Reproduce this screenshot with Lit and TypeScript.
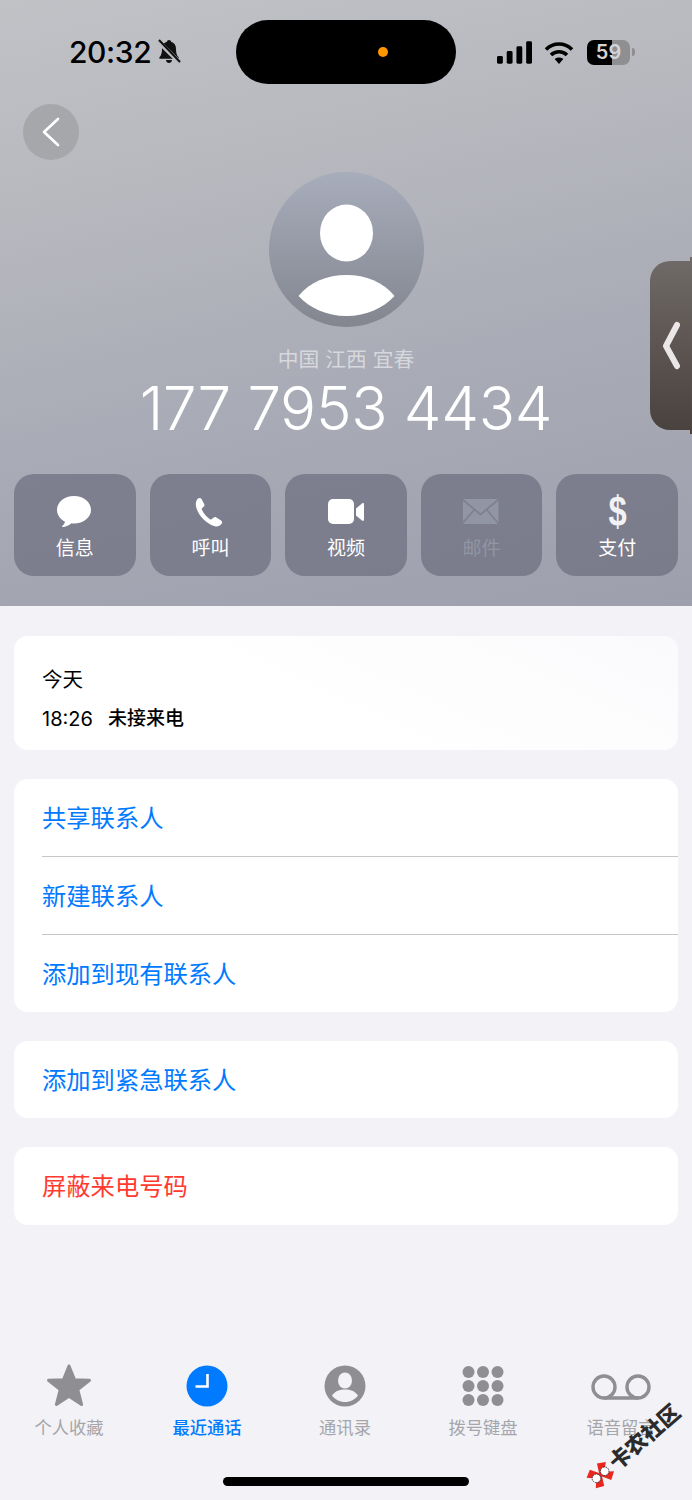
import { LitElement, html, css, svg } from 'lit';
import { customElement } from 'lit/decorators.js';

const actionIcons = {
  message: svg`<svg width="36" height="40" viewBox="1 0 36 40"><path fill="#fff" d="M18 4C8.600 4 1 10.200 1 17.900c0 5 3.200 9.300 8 11.800-.4 1.700-1.500 3.300-2.900 4.500-.4.400-.1 1 .4.900 3.400-.300 6.600-1.700 8.900-3.800 1 .1 1.700.2 2.600.2 9.400 0 17-6.300 17-13.600C35 10.200 27.400 4 18 4z"/></svg>`,
  phone: svg`<svg width="34" height="37" viewBox="1.500 0 24 26"><path fill="#fff" d="M5 3.200C6 2.400 7 2.600 7.600 3.600L9.400 7C9.800 7.800 9.600 8.500 9 9L8 9.800C7.600 10.200 7.600 10.600 7.800 11.100C9 13.800 11 16.100 13.500 17.700C14 18 14.500 18 14.900 17.600L15.900 16.700C16.500 16.200 17.300 16.100 18 16.500L21.300 18.600C22.200 19.200 22.400 20.300 21.600 21.100C20.400 22.400 18.900 23.200 17 22.700C10.500 21 4.800 14.500 3.600 8.500C3.200 6.300 3.800 4.400 5 3.200Z"/></svg>`,
  video: svg`<svg width="38" height="40" viewBox="0 0 38 40"><rect x="1" y="7" width="26" height="25" rx="5" fill="#fff"/><path fill="#fff" d="M29 16.500 35 11.500c1-.8 2-.3 2 1v15c0 1.300-1 1.800-2 1l-6-5z"/></svg>`,
  mail: svg`<svg width="38" height="40" viewBox="2.500 1 38 40" fill="none" stroke="#9295a3" stroke-width="1.800"><rect x="2" y="8" width="36" height="25" rx="2" fill="#9295a3" stroke="none"/><path stroke="#7f818f" d="M2 8.500 20 23.500 38 8.500M2 32.500 14 18.500M38 32.500 26 18.500"/></svg>`,
};

const tabIcons = {
  star: svg`<svg width="46" height="44" viewBox="0 0 46 44"><path fill="#8e8e93" stroke="#8e8e93" stroke-width="3" stroke-linejoin="round" d="M23 3 28.600 16.700 43.500 17.300 31.800 26.700 35.600 41.500 23 33.200 10.400 41.500 14.200 26.700 2.500 17.300 17.400 16.700z"/></svg>`,
  clock: svg`<svg width="46" height="44" viewBox="0 0 46 44"><circle cx="23" cy="23" r="20.500" fill="#007aff"/><path d="M23.500 11v12.500H11.500" fill="none" stroke="#fff" stroke-width="2.600"/></svg>`,
  person: svg`<svg width="46" height="44" viewBox="0 0 46 44"><circle cx="23" cy="23" r="20.500" fill="#8e8e93"/><ellipse cx="23" cy="17.500" rx="7" ry="8" fill="#f2f2f7"/><path d="M10 32.500C13 28 18 26.500 23 26.500s10 1.500 13 6C33 36.500 28.500 39 23 39s-10-2.500-13-6.500z" fill="#f2f2f7"/></svg>`,
  keypad: svg`<svg width="46" height="44" viewBox="0 0 46 44" fill="#8e8e93"><circle cx="8.500" cy="9" r="6"/><circle cx="23" cy="9" r="6"/><circle cx="37.500" cy="9" r="6"/><circle cx="8.500" cy="23" r="6"/><circle cx="23" cy="23" r="6"/><circle cx="37.500" cy="23" r="6"/><circle cx="8.500" cy="37" r="6"/><circle cx="23" cy="37" r="6"/><circle cx="37.500" cy="37" r="6"/></svg>`,
  voicemail: svg`<svg width="60" height="44" viewBox="0 0 60 44" fill="none" stroke="#8e8e93" stroke-width="3.400"><circle cx="13" cy="24" r="11"/><circle cx="47" cy="24" r="11"/><path d="M13 35h34"/></svg>`,
};

const actions = [
  { label: '信息', icon: actionIcons.message },
  { label: '呼叫', icon: actionIcons.phone },
  { label: '视频', icon: actionIcons.video },
  { label: '邮件', icon: actionIcons.mail, off: true },
  { label: '支付', icon: html`<span class="dollar">$</span>` },
];

const tabs = [
  { label: '个人收藏', icon: tabIcons.star },
  { label: '最近通话', icon: tabIcons.clock, active: true },
  { label: '通讯录', icon: tabIcons.person },
  { label: '拨号键盘', icon: tabIcons.keypad },
  { label: '语音留言', icon: tabIcons.voicemail },
];

@customElement('app-root')
export class AppRoot extends LitElement {
  static styles = css`
    :host {
      display: flex;
      flex-direction: column;
      position: relative;
      width: 692px;
      height: 1500px;
      overflow: hidden;
      background: #f2f2f7;
      font-family: Inter, 'Noto Sans CJK SC', sans-serif;
      color: #000;
    }

    .header {
      height: 606px;
      flex: none;
      background: linear-gradient(168deg, #c1c2c6 0%, #b7b8be 30%, #a9abb6 60%, #9d9fad 100%);
    }

    .status {
      display: flex;
      align-items: center;
      height: 64px;
      padding-top: 20px;
    }
    .time-wrap {
      width: 236px;
      display: flex;
      align-items: center;
      padding-left: 69px;
      box-sizing: border-box;
      gap: 6px;
      font-size: 30px;
      font-weight: 500;
      letter-spacing: -0.4px;
    }
    .island {
      width: 220px;
      height: 64px;
      border-radius: 32px;
      background: #000;
      display: flex;
      align-items: center;
      justify-content: flex-end;
      padding-right: 68px;
      box-sizing: border-box;
    }
    .dot {
      width: 10px;
      height: 10px;
      border-radius: 50%;
      background: #ff9500;
    }
    .status-right {
      display: flex;
      align-items: center;
      padding-left: 41px;
      gap: 12px;
    }
    .battery {
      position: relative;
      width: 43px;
      height: 25px;
      margin-left: 1px;
      border-radius: 7px;
      overflow: hidden;
      background: linear-gradient(90deg, #000 0 57%, #8f8f92 57% 100%);
      color: #d4d4d6;
      font-size: 20px;
      font-weight: 600;
      line-height: 25px;
      text-align: center;
    }
    .nub {
      width: 3px;
      height: 8px;
      margin-left: -10px;
      border-radius: 0 3px 3px 0;
      background: #8f8f92;
    }

    .back {
      width: 56px;
      height: 56px;
      margin: 20px 0 0 23px;
      border-radius: 50%;
      background: #a6a7ab;
      display: flex;
      align-items: center;
      justify-content: center;
    }

    .avatar {
      width: 155px;
      height: 155px;
      margin: 12px auto 0;
      display: block;
    }

    .location {
      margin-top: 20px;
      text-align: center;
      font-size: 20.800px;
      line-height: 26px;
      color: rgba(255, 255, 255, 0.55);
    }
    .number {
      text-align: center;
      font-size: 60px;
      font-weight: 300;
      line-height: 72px;
      margin-top: -1px;
      color: #fff;
      letter-spacing: -0.3px;
    }

    .actions {
      display: grid;
      grid-template-columns: repeat(5, 1fr);
      gap: 14px;
      margin: 30px 14px 0;
    }
    .action {
      height: 102px;
      border-radius: 20px;
      background: rgba(100, 102, 120, 0.62);
      display: flex;
      flex-direction: column;
      align-items: center;
      padding-top: 18px;
      box-sizing: border-box;
      color: #fff;
      font-size: 19px;
    }
    .action.off {
      color: #9295a3;
    }
    .action .glyph {
      height: 40px;
      display: flex;
      align-items: center;
      justify-content: center;
    }
    .action .label {
      margin-top: 3px;
      line-height: 27px;
    }
    .dollar {
      font-family: 'Liberation Sans', sans-serif;
      font-size: 42px;
      font-weight: 700;
      line-height: 40px;
      color: #f2f2f5;
      transform: scaleX(0.78);
    }

    .side-tab {
      position: absolute;
      top: 261px;
      right: 0;
      width: 42px;
      height: 169px;
      border-radius: 20px 0 0 20px;
      background: linear-gradient(180deg, #6f6a67 0%, #5c5551 50%, #4a423e 100%);
      display: flex;
      align-items: center;
      padding-left: 12px;
      box-sizing: border-box;
    }
    .side-tab::after {
      content: '';
      position: absolute;
      top: -4px;
      bottom: -4px;
      right: 0;
      width: 2px;
      background: linear-gradient(180deg, #6f6a67 0%, #4a423e 100%);
    }

    .content {
      display: flex;
      flex-direction: column;
      gap: 28.600px;
      margin: 30px 14px 0;
    }
    .card {
      background: #fff;
      border-radius: 14px;
      overflow: hidden;
    }
    .recent {
      height: 114px;
      padding: 28px 28px 0;
      box-sizing: border-box;
      background: linear-gradient(205deg, #fafafc 0%, #fdfdfe 35%, #fff 60%);
    }
    .today {
      font-size: 20.500px;
      line-height: 32px;
    }
    .call {
      display: flex;
      gap: 15px;
      align-items: center;
      margin-top: 11px;
      line-height: 24px;
    }
    .call .t {
      font-size: 20px;
    }
    .call .m {
      font-size: 19px;
      font-weight: 500;
    }
    .row {
      height: 77.800px;
      padding: 0 0 2px 28px;
      box-sizing: border-box;
      display: flex;
      align-items: center;
      font-size: 24.300px;
      color: #007aff;
    }
    .row + .row {
      position: relative;
    }
    .row + .row::before {
      content: '';
      position: absolute;
      top: 0;
      left: 28px;
      right: 0;
      height: 1px;
      background: #c6c6c8;
    }
    .row.danger {
      color: #ff3b30;
    }

    .tabs {
      display: grid;
      grid-template-columns: repeat(5, 1fr);
      margin-top: 138px;
      padding-right: 2px;
    }
    .tab {
      display: flex;
      flex-direction: column;
      align-items: center;
      color: #a6a6aa;
      font-size: 17.300px;
    }
    .tab.active {
      color: #007aff;
      font-weight: 500;
    }
    .tab .label {
      margin-top: 9.500px;
      line-height: 24px;
    }

    .home {
      width: 246px;
      height: 9px;
      border-radius: 5px;
      background: #000;
      margin: 37px auto 0;
    }

    .watermark {
      position: absolute;
      left: 590px;
      top: 1470px;
      display: flex;
      align-items: center;
      gap: 1px;
      transform: rotate(-41deg);
      transform-origin: 0 50%;
      font-size: 21.500px;
      font-weight: 900;
      line-height: 28px;
      color: #2b2b2b;
      white-space: nowrap;
    }
  `;

  render() {
    return html`
      <div class="header">
        <div class="status">
          <div class="time-wrap">
            <span>20:32</span>
            ${svg`<svg width="24" height="26" viewBox="0 0 24 26"><path fill="#111" d="M12 1c-1.200 0-2 .8-2 1.800C6.800 3.700 5 6.300 5 9.800c0 4.400-.8 6.500-2.500 8.400-.5.600-.2 1.600.8 1.600h17.400c1 0 1.300-1 .8-1.600C19.800 16.300 19 14.200 19 9.800c0-3.500-1.800-6.100-5-7 0-1-.8-1.800-2-1.800zM9 21c.2 1.900 1.400 3 3 3s2.800-1.100 3-3z"/><path d="M1 2 23 24" stroke="#b9bac0" stroke-width="4.500"/><path d="M2 1 23 23" stroke="#111" stroke-width="2"/></svg>`}
          </div>
          <div class="island"><span class="dot"></span></div>
          <div class="status-right">
            ${svg`<svg width="35" height="23" viewBox="0 0 36 23" fill="#000"><rect x="0" y="15" width="6" height="8" rx="1.500"/><rect x="10" y="10" width="6" height="13" rx="1.500"/><rect x="20" y="5" width="6" height="18" rx="1.500"/><rect x="30" y="0" width="6" height="23" rx="1.500"/></svg>`}
            ${svg`<svg width="30" height="24" viewBox="0 0 30 24" fill="none" stroke="#000" stroke-width="3.600"><path d="M2 9.500C9.500 2.200 20.500 2.200 28 9.500"/><path d="M7 15c4.500-4.300 11.500-4.300 16 0"/><path d="M15 24 10.700 19c2.500-2 6.100-2 8.600 0z" fill="#000" stroke="none"/></svg>`}
            <div class="battery">59</div>
            <div class="nub"></div>
          </div>
        </div>

        <div class="back">
          ${svg`<svg width="20" height="32" viewBox="0 0 20 32" fill="none" stroke="#fff" stroke-width="2.600" stroke-linecap="round" stroke-linejoin="round"><path d="M17 3 3 16 17 29"/></svg>`}
        </div>

        ${svg`<svg class="avatar" viewBox="0 0 155 155"><defs><linearGradient id="av" x1="0" y1="0" x2="0" y2="1"><stop offset="0" stop-color="#a8adbc"/><stop offset="1" stop-color="#83868f"/></linearGradient></defs><circle cx="77.500" cy="77.500" r="77.500" fill="url(#av)"/><ellipse cx="77.500" cy="61" rx="26.500" ry="28.500" fill="#fff"/><path d="M29.500 124C41 110 58 103 77.500 103s36.500 7 48 21c-11 12-28 20-48 20s-37-8-48-20z" fill="#fff"/></svg>`}

        <div class="location">中国 江西 宜春</div>
        <div class="number">177 7953 4434</div>

        <div class="actions">
          ${actions.map(
            (a) => html`
              <div class="action ${a.off ? 'off' : ''}">
                <div class="glyph">${a.icon}</div>
                <div class="label">${a.label}</div>
              </div>
            `
          )}
        </div>
      </div>

      <div class="side-tab">
        ${svg`<svg width="20" height="50" viewBox="0 0 20 50" fill="none" stroke="#ebe7e8" stroke-width="6" stroke-linecap="round" stroke-linejoin="round"><path d="M15 4 4 25 15 45"/></svg>`}
      </div>

      <div class="content">
        <div class="card recent">
          <div class="today">今天</div>
          <div class="call"><span class="t">18:26</span><span class="m">未接来电</span></div>
        </div>
        <div class="card">
          <div class="row">共享联系人</div>
          <div class="row">新建联系人</div>
          <div class="row">添加到现有联系人</div>
        </div>
        <div class="card"><div class="row">添加到紧急联系人</div></div>
        <div class="card"><div class="row danger">屏蔽来电号码</div></div>
      </div>

      <div class="tabs">
        ${tabs.map(
          (t) => html`
            <div class="tab ${t.active ? 'active' : ''}">
              ${t.icon}
              <div class="label">${t.label}</div>
            </div>
          `
        )}
      </div>

      <div class="home"></div>

      <div class="watermark">
        ${svg`<svg width="28" height="26" viewBox="0 0 36 30"><path fill="#e8281f" d="M2 6 12 1 18 12 24 1 34 7 24 15 34 23 24 29 18 18 12 29 2 24 11 15z"/><circle cx="11" cy="15" r="5.500" fill="#fff" stroke="#222" stroke-dasharray="2 1"/><circle cx="25" cy="15" r="5.500" fill="#fff" stroke="#222" stroke-dasharray="2 1"/></svg>`}
        <span>卡农社区</span>
      </div>
    `;
  }
}
